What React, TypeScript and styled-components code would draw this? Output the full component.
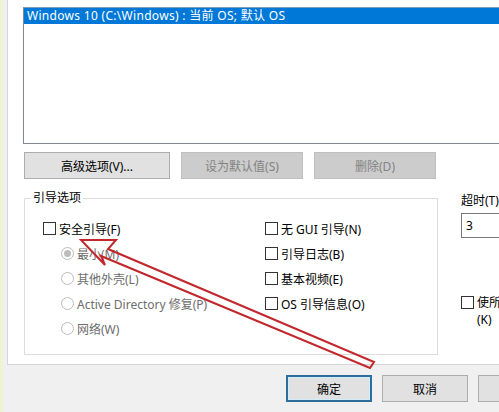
import { createGlobalStyle, styled } from 'styled-components'

const GlobalStyle = createGlobalStyle`
  html, body {
    margin: 0;
    padding: 0;
    background: #f0f0f0;
  }
  body {
    font-family: "Noto Sans", "Noto Sans CJK SC", sans-serif;
    font-size: 12px;
    color: #000;
  }
`

const Screen = styled.div`
  position: relative;
  width: 499px;
  height: 412px;
  overflow: hidden;
  background: #f0f0f0;
  border-left: 3px solid #eef4d2;
  box-sizing: border-box;
`

const Panel = styled.div`
  margin-left: 4px;
  margin-top: -1px;
  width: 540px;
  height: 366px;
  box-sizing: border-box;
  background: #fff;
  border: 1px solid #d6d6d6;
  display: flex;
  flex-direction: column;
`

const ListBox = styled.div`
  margin: 7px 0 0 15px;
  height: 137px;
  border: 1px solid #828790;
  border-top-color: #7a9cb8;
  box-sizing: border-box;
`

const SelectedItem = styled.div`
  height: 16px;
  line-height: 16px;
  padding-left: 3px;
  background: #0078d7;
  color: #fff;
  letter-spacing: 0.3px;
  white-space: nowrap;
`

const ButtonRow = styled.div`
  display: flex;
  gap: 11px;
  margin: 8px 0 0 16px;
`

const Button = styled.div<{ $w: number; $disabled?: boolean; $focused?: boolean }>`
  width: ${(p) => p.$w}px;
  height: 27px;
  box-sizing: border-box;
  display: flex;
  align-items: center;
  justify-content: center;
  background: ${(p) => (p.$disabled ? '#cccccc' : '#e1e1e1')};
  border: ${(p) =>
    p.$focused ? '2px solid #2f6e9c' : p.$disabled ? '1px solid #bfbfbf' : '1px solid #adadad'};
  box-shadow: ${(p) => (p.$focused ? 'inset 0 0 0 1px #cfeefc' : 'none')};
  color: ${(p) => (p.$disabled ? '#838383' : '#000')};
  white-space: nowrap;
  flex-shrink: 0;
`

const OptionsArea = styled.div`
  display: flex;
  margin: 11px 0 0 16px;
  gap: 23px;
`

const GroupBox = styled.fieldset`
  width: 414px;
  height: 165px;
  flex-shrink: 0;
  box-sizing: border-box;
  margin: 0;
  padding: 0;
  border: 1px solid #dcdcdc;
  display: grid;
  grid-template-columns: 240px 1fr;
`

const Legend = styled.legend`
  margin-left: 6px;
  padding: 0 2px;
  line-height: 16px;
`

const Column = styled.div<{ $indent: number }>`
  display: flex;
  flex-direction: column;
  padding: 10px 0 0 ${(p) => p.$indent}px;
`

const OptionRow = styled.div<{ $disabled?: boolean; $sub?: boolean }>`
  height: 25px;
  display: flex;
  align-items: center;
  gap: 3px;
  padding-left: ${(p) => (p.$sub ? 18 : 0)}px;
  color: ${(p) => (p.$disabled ? '#6d6d6d' : '#000')};
  white-space: nowrap;
`

const CheckBox = styled.span`
  width: 13px;
  height: 13px;
  box-sizing: border-box;
  border: 1px solid #333;
  background: #fff;
  flex-shrink: 0;
`

const Radio = styled.span<{ $checked?: boolean }>`
  width: 13px;
  height: 13px;
  box-sizing: border-box;
  border: 1px solid #bcbcbc;
  border-radius: 50%;
  background: #fff;
  flex-shrink: 0;
  display: flex;
  align-items: center;
  justify-content: center;
  &::after {
    content: '';
    display: ${(p) => (p.$checked ? 'block' : 'none')};
    width: 7px;
    height: 7px;
    border-radius: 50%;
    background: #bcbcbc;
  }
`

const SideColumn = styled.div`
  display: flex;
  flex-direction: column;
  padding-top: 3px;
`

const FieldLabel = styled.div`
  line-height: 16px;
  white-space: nowrap;
`

const TextInput = styled.div`
  margin-top: 4px;
  width: 80px;
  height: 25px;
  box-sizing: border-box;
  border: 1px solid #7a7a7a;
  padding: 0 4px;
  display: flex;
  align-items: center;
`

const SideCheck = styled.div`
  margin-top: 56px;
  display: flex;
  gap: 3px;
  align-items: flex-start;
  line-height: 17px;
  white-space: nowrap;
  & > span:first-child {
    margin-top: 2px;
  }
`

const Footer = styled.div`
  display: flex;
  gap: 10px;
  margin: 10px 0 0 283px;
`

const Annotation = styled.svg`
  position: absolute;
  left: 0;
  top: 0;
  pointer-events: none;
`

export default function App() {
  return (
    <>
      <GlobalStyle />
      <Screen>
        <Panel>
          <ListBox>
            <SelectedItem>Windows 10 (C:\Windows) : 当前 OS; 默认 OS</SelectedItem>
          </ListBox>
          <ButtonRow>
            <Button $w={146}>高级选项(V)...</Button>
            <Button $w={122} $disabled>
              设为默认值(S)
            </Button>
            <Button $w={122} $disabled>
              删除(D)
            </Button>
          </ButtonRow>
          <OptionsArea>
            <GroupBox>
              <Legend>引导选项</Legend>
              <Column $indent={18}>
                <OptionRow>
                  <CheckBox />
                  安全引导(F)
                </OptionRow>
                <OptionRow $disabled $sub>
                  <Radio $checked />
                  最小(M)
                </OptionRow>
                <OptionRow $disabled $sub>
                  <Radio />
                  其他外壳(L)
                </OptionRow>
                <OptionRow $disabled $sub>
                  <Radio />
                  Active Directory 修复(P)
                </OptionRow>
                <OptionRow $disabled $sub>
                  <Radio />
                  网络(W)
                </OptionRow>
              </Column>
              <Column $indent={0}>
                <OptionRow>
                  <CheckBox />
                  无 GUI 引导(N)
                </OptionRow>
                <OptionRow>
                  <CheckBox />
                  引导日志(B)
                </OptionRow>
                <OptionRow>
                  <CheckBox />
                  基本视频(E)
                </OptionRow>
                <OptionRow>
                  <CheckBox />
                  OS 引导信息(O)
                </OptionRow>
              </Column>
            </GroupBox>
            <SideColumn>
              <FieldLabel>超时(T):</FieldLabel>
              <TextInput>3</TextInput>
              <SideCheck>
                <CheckBox />
                <span>
                  使所有引导设置成为永久设置
                  <br />
                  (K)
                </span>
              </SideCheck>
            </SideColumn>
          </OptionsArea>
        </Panel>
        <Footer>
          <Button $w={86} $focused>
            确定
          </Button>
          <Button $w={86}>取消</Button>
          <Button $w={86}>应用(A)</Button>
        </Footer>
        <Annotation width="499" height="412" viewBox="0 0 499 412">
          <polygon
            points="78,240 113,240 105,249 371,362 367,368 98,256 102,265"
            fill="none"
            stroke="#c1272d"
            strokeWidth="2"
            strokeLinejoin="miter"
          />
        </Annotation>
      </Screen>
    </>
  )
}
